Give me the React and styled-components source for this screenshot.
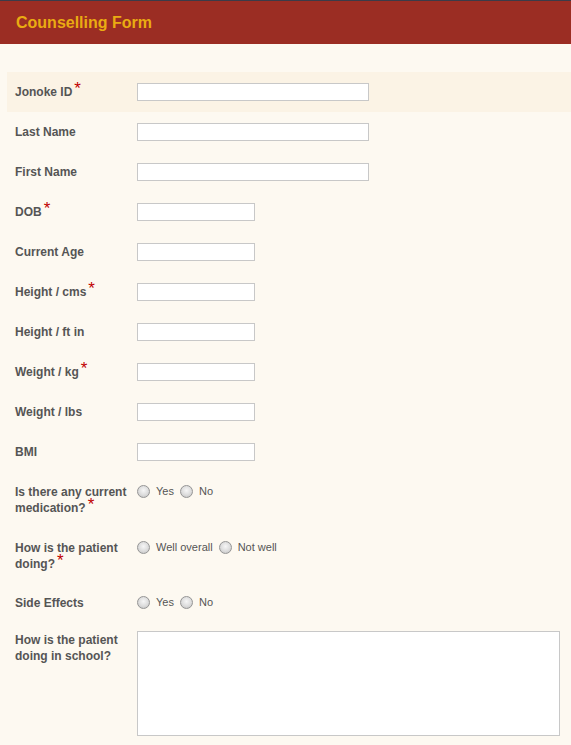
import styled, { createGlobalStyle } from "styled-components";

const GlobalStyle = createGlobalStyle`
  body {
    margin: 0;
    background: #fdf9f1;
    font-family: "Liberation Sans", Arial, sans-serif;
  }
`;

const Header = styled.header`
  background-color: #9b2d23;
  border-top: 1px solid #3b3b48;
  height: 43px;
  display: flex;
  align-items: center;
  padding-left: 16px;
  h1 {
    margin: 0;
    font-size: 16px;
    font-weight: bold;
    color: #eaab12;
  }
`;

const FormList = styled.ul`
  list-style: none;
  margin: 0;
  padding: 28px 0 0 7px;
`;

const Row = styled.li`
  display: flex;
  align-items: flex-start;
  padding: ${(p) => p.$pad || "11px 8px 11px"};
  background: ${(p) => (p.$active ? "#fbf3e5" : "transparent")};
`;

const Label = styled.label`
  width: 122px;
  flex-shrink: 0;
  font-size: 12px;
  font-weight: bold;
  line-height: 16px;
  color: #555;
  padding-top: 1px;
`;

const Star = styled.span`
  color: #c00000;
  font-size: 17px;
  font-weight: normal;
  position: relative;
  top: -2px;
  margin-left: 2px;
  line-height: 0;
`;

const TextInput = styled.input`
  box-sizing: border-box;
  width: ${(p) => (p.$wide ? "232px" : "118px")};
  height: 18px;
  margin: 0;
  border: 1px solid #c8c8c8;
  background: #fff;
  padding: 0 3px;
  font-size: 12px;
`;

const Options = styled.div`
  display: flex;
  align-items: center;
  gap: 6px;
  font-size: 11px;
  color: #555;
  line-height: 14px;
`;

const Option = styled.label`
  display: flex;
  align-items: center;
  gap: 6px;
`;

const Radio = styled.input.attrs({ type: "radio" })`
  appearance: none;
  width: 13px;
  height: 13px;
  margin: 2px 0 0;
  border-radius: 50%;
  border: 1px solid #959595;
  background: radial-gradient(circle at 50% 40%, #f6f6f6 0%, #dcdcdc 55%, #bdbdbd 100%);
  box-sizing: border-box;
`;

const TextArea = styled.textarea`
  box-sizing: border-box;
  width: 423px;
  height: 105px;
  margin: 0;
  border: 1px solid #c8c8c8;
  background: #fff;
  resize: none;
`;

const fields = [
  { label: "Jonoke ID", req: true, wide: true, active: true },
  { label: "Last Name", wide: true },
  { label: "First Name", wide: true },
  { label: "DOB", req: true },
  { label: "Current Age" },
  { label: "Height / cms", req: true },
  { label: "Height / ft in" },
  { label: "Weight / kg", req: true },
  { label: "Weight / lbs" },
  { label: "BMI" },
];

const radios = [
  { label: "Is there any current medication?", req: true, opts: ["Yes", "No"], name: "med", pad: "11px 8px 12px" },
  { label: "How is the patient doing?", req: true, opts: ["Well overall", "Not well"], name: "doing", pad: "11px 8px 14px" },
  { label: "Side Effects", opts: ["Yes", "No"], name: "side", pad: "8px 8px 10px" },
];

export default function App() {
  return (
    <>
      <GlobalStyle />
      <Header>
        <h1>Counselling Form</h1>
      </Header>
      <FormList>
        {fields.map((f) => (
          <Row key={f.label} $active={f.active}>
            <Label>
              {f.label}
              {f.req && <Star>*</Star>}
            </Label>
            <TextInput type="text" $wide={f.wide} />
          </Row>
        ))}
        {radios.map((r) => (
          <Row key={r.name} $pad={r.pad}>
            <Label>
              {r.label}
              {r.req && <Star>*</Star>}
            </Label>
            <Options>
              {r.opts.map((o) => (
                <Option key={o}>
                  <Radio name={r.name} />
                  {o}
                </Option>
              ))}
            </Options>
          </Row>
        ))}
        <Row $pad="10px 8px 8px">
          <Label>How is the patient doing in school?</Label>
          <TextArea />
        </Row>
      </FormList>
    </>
  );
}
